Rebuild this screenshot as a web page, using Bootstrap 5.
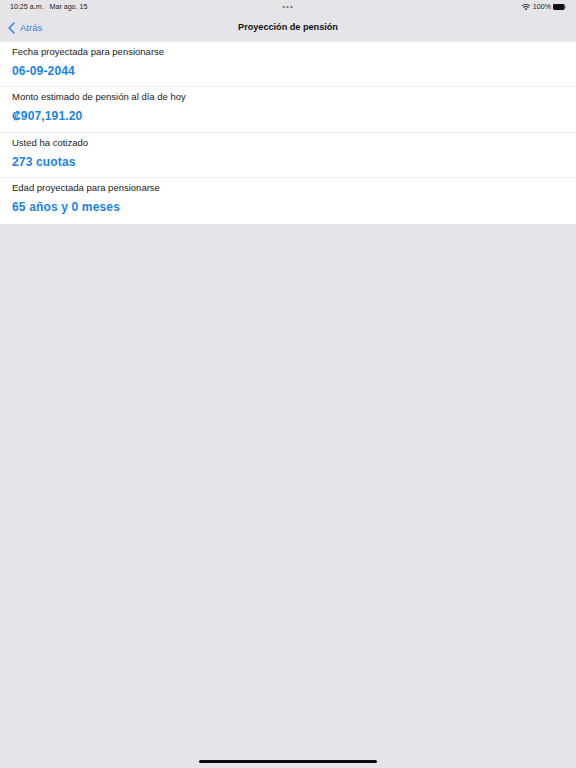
<!DOCTYPE html>
<html lang="es">
<head>
<meta charset="utf-8">
<title>Proyección de pensión</title>
<link href="https://cdn.jsdelivr.net/npm/bootstrap@5.3.0/dist/css/bootstrap.min.css" rel="stylesheet">
<style>
html,body{height:100%}
body{background:#e4e4e9;font-family:"Liberation Sans",Arial,sans-serif;color:#1c1c1e;overflow:hidden}
.screen-wrap{height:768px}
.status-row{height:14px;padding:0 10px;font-size:7.1px;line-height:14px;color:#222}
.status-time{margin-right:6px}
.status-dots{font-size:8px;letter-spacing:1px;color:#777;line-height:14px}
.status-side{width:140px}
.status-batt-text{font-size:7.1px;margin:0 2px 0 3px}
.nav-row{height:28px;padding:0 8px}
.nav-back{color:#3a86e0;font-size:9.5px;text-decoration:none;gap:5px;width:140px}
.nav-title{font-size:9.15px;font-weight:700;color:#111;text-align:center}
.info-list{border-radius:0;background:#fff}
.info-item{height:45.4px;padding:2px 12px 0;border:0;border-bottom:1px solid #f0f0f2;background:#fff}
.info-item:last-child{border-bottom:0}
.info-label{font-size:9.5px;line-height:13px;color:#222;margin-top:1px}
.info-value{font-size:12px;line-height:16px;font-weight:700;color:#1a83e6;margin-top:5px;letter-spacing:.15px}
.home-bar{width:178px;height:3px;background:#0c0c0f;border-radius:2px;bottom:5px;left:199px}
</style>
</head>
<body>
<div class="screen-wrap d-flex flex-column position-relative">
  <div class="status-row d-flex justify-content-between align-items-center">
    <div class="status-side d-flex"><span class="status-time">10:25 a.m.</span><span>Mar ago. 15</span></div>
    <div class="status-dots">•••</div>
    <div class="status-side d-flex justify-content-end align-items-center">
      <svg width="8" height="7" viewBox="0 0 20 16" aria-hidden="true"><path d="M10 15 6.8 11.6a4.6 4.6 0 0 1 6.4 0Z" fill="#222"/><path d="M4.6 9.4a7.8 7.8 0 0 1 10.8 0l1.7-1.8a10.3 10.3 0 0 0-14.2 0Z" fill="#222"/><path d="M.6 5.2a13.5 13.5 0 0 1 18.8 0L21 3.6a16 16 0 0 0-22 0Z" fill="#222"/></svg>
      <span class="status-batt-text">100%</span>
      <svg width="13" height="6" viewBox="0 0 13 6" aria-hidden="true"><rect x="0" y="0" width="11.6" height="6" rx="1.4" fill="#111"/><rect x="12" y="1.8" width="1" height="2.4" rx=".5" fill="#888"/></svg>
    </div>
  </div>
  <div class="nav-row d-flex justify-content-between align-items-center">
    <a class="nav-back d-flex align-items-center" href="#">
      <svg width="7" height="12" viewBox="0 0 7 12" aria-hidden="true"><path d="M6 1 1.2 6 6 11" fill="none" stroke="#3a86e0" stroke-width="1.6" stroke-linecap="round" stroke-linejoin="round"/></svg>
      <span>Atrás</span>
    </a>
    <div class="nav-title">Proyección de pensión</div>
    <div class="status-side"></div>
  </div>
  <ul class="list-group info-list">
    <li class="list-group-item info-item"><div class="info-label">Fecha proyectada para pensionarse</div><div class="info-value">06-09-2044</div></li>
    <li class="list-group-item info-item"><div class="info-label">Monto estimado de pensión al día de hoy</div><div class="info-value">₡907,191.20</div></li>
    <li class="list-group-item info-item"><div class="info-label">Usted ha cotizado</div><div class="info-value">273 cuotas</div></li>
    <li class="list-group-item info-item"><div class="info-label">Edad proyectada para pensionarse</div><div class="info-value">65 años y 0 meses</div></li>
  </ul>
  <div class="home-bar position-absolute"></div>
</div>
<script src="https://cdn.jsdelivr.net/npm/bootstrap@5.3.0/dist/js/bootstrap.bundle.min.js"></script>
</body>
</html>
